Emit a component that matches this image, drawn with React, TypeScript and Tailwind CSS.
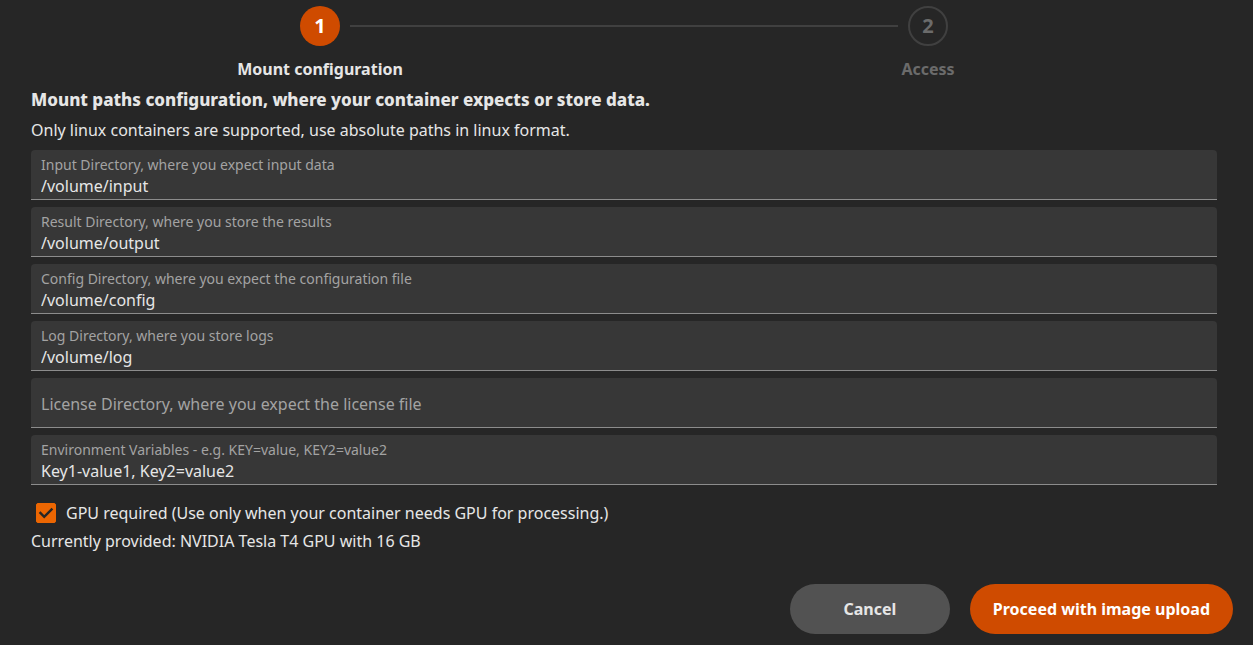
import { useState } from "react";

type Field = { id: string; label: string; value: string };

const initialFields: Field[] = [
  { id: "input", label: "Input Directory, where you expect input data", value: "/volume/input" },
  { id: "result", label: "Result Directory, where you store the results", value: "/volume/output" },
  { id: "config", label: "Config Directory, where you expect the configuration file", value: "/volume/config" },
  { id: "log", label: "Log Directory, where you store logs", value: "/volume/log" },
  { id: "license", label: "License Directory, where you expect the license file", value: "" },
  { id: "env", label: "Environment Variables - e.g. KEY=value, KEY2=value2", value: "Key1-value1, Key2=value2" },
];

function Stepper() {
  return (
    <ol className="grid grid-cols-2 pr-[5px] font-bold">
      <li className="relative flex flex-col items-center" aria-current="step">
        <span className="flex size-10 items-center justify-center rounded-full bg-[#cf4b00] text-xl text-white">1</span>
        <span className="mt-3 leading-[22px]">Mount configuration</span>
        <span className="absolute top-[19px] right-[calc(-50%+30px)] left-[calc(50%+30px)] h-0.5 bg-[#404040]" />
      </li>
      <li className="flex flex-col items-center text-[#6b6b6b]">
        <span className="flex size-10 items-center justify-center rounded-full border-2 border-[#404040] text-xl">2</span>
        <span className="mt-3 leading-[22px]">Access</span>
      </li>
    </ol>
  );
}

function TextField({ field, onChange }: { field: Field; onChange: (value: string) => void }) {
  const filled = field.value !== "";
  return (
    <div className="relative h-[50px] rounded-t border-b border-[#8c8c8c] bg-[#373737]">
      <label
        htmlFor={field.id}
        className={
          filled
            ? "pointer-events-none absolute top-[5px] left-2.5 text-sm leading-5 text-[#a3a3a3]"
            : "pointer-events-none absolute top-[15px] left-2.5 leading-[22px] text-[#a3a3a3]"
        }
      >
        {field.label}
      </label>
      <input
        id={field.id}
        type="text"
        value={field.value}
        onChange={(e) => onChange(e.target.value)}
        className="h-full w-full bg-transparent px-2.5 pt-6 pb-0.5 outline-none"
      />
    </div>
  );
}

export default function App() {
  const [fields, setFields] = useState(initialFields);
  const [gpu, setGpu] = useState(true);

  return (
    <main className="min-h-screen bg-[#262626] pt-1.5 pr-4 pb-[11px] pl-4 font-['Noto_Sans',sans-serif] text-base text-[#e6e6e6]">
      <Stepper />
      <form className="pt-2" onSubmit={(e) => e.preventDefault()}>
        <div className="pr-5 pl-[15px]">
          <h1 className="text-[17px] leading-6 font-extrabold">Mount paths configuration, where your container expects or store data.</h1>
          <p className="pt-1.5 leading-6">Only linux containers are supported, use absolute paths in linux format.</p>
          <div className="mt-2 flex flex-col gap-[7px]">
            {fields.map((field) => (
              <TextField
                key={field.id}
                field={field}
                onChange={(value) => setFields((all) => all.map((f) => (f.id === field.id ? { ...f, value } : f)))}
              />
            ))}
          </div>
          <label className="mt-4 flex items-center gap-2.5 pl-[5px] leading-6">
            <span className="relative flex size-5">
              <input
                type="checkbox"
                checked={gpu}
                onChange={(e) => setGpu(e.target.checked)}
                className="size-5 appearance-none rounded-[2px] border border-[#ec6602] checked:bg-[#ec6602]"
              />
              {gpu && (
                <svg viewBox="0 0 20 20" className="pointer-events-none absolute inset-0 size-5" fill="none" stroke="#262626" strokeWidth="2.4" aria-hidden="true">
                  <path d="M3.6 9.2 8.2 13.8 16.4 5.6" />
                </svg>
              )}
            </span>
            GPU required (Use only when your container needs GPU for processing.)
          </label>
          <p className="pt-1 leading-6">Currently provided: NVIDIA Tesla T4 GPU with 16 GB</p>
        </div>
        <div className="mt-[31px] flex justify-end gap-5 pr-1 font-bold">
          <button type="button" className="h-[50px] w-40 rounded-full bg-[#525252]">
            Cancel
          </button>
          <button type="submit" className="h-[50px] rounded-full bg-[#cf4b00] px-[23px] text-white">
            Proceed with image upload
          </button>
        </div>
      </form>
    </main>
  );
}
